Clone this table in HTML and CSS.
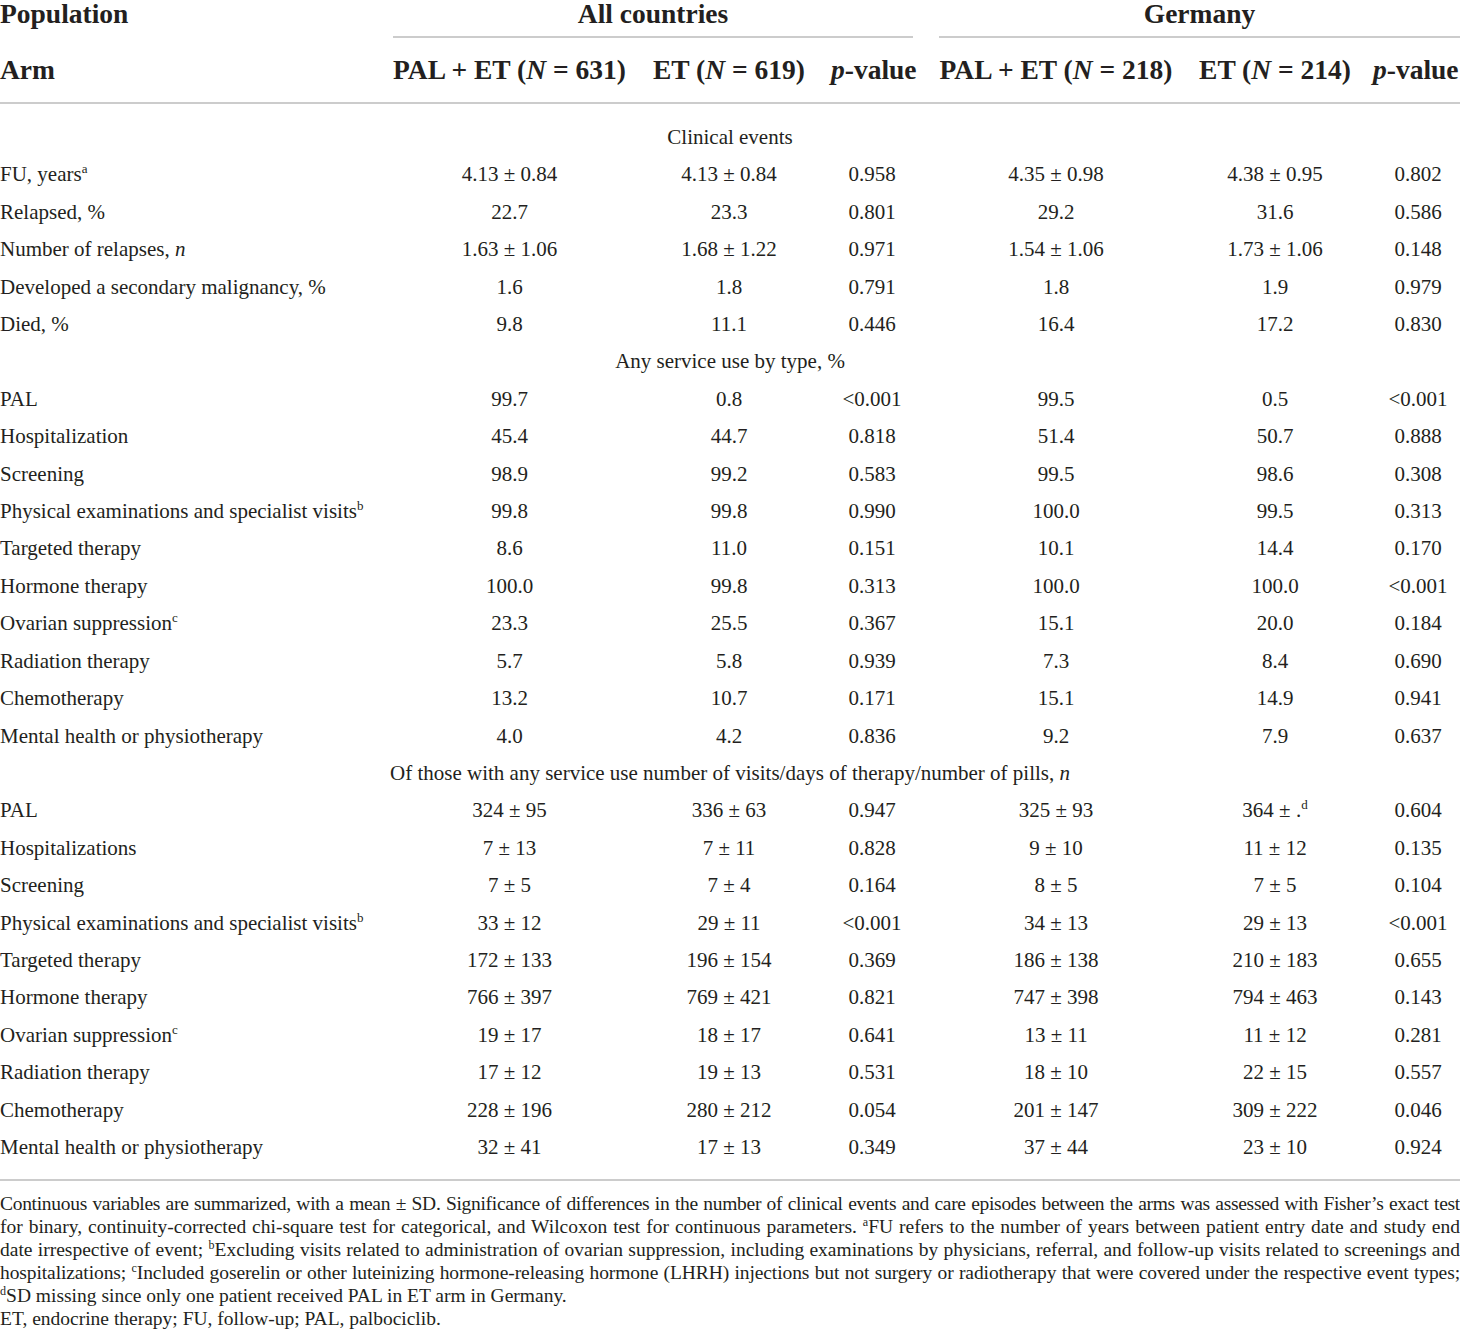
FILE: index.html
```html
<!DOCTYPE html>
<html lang="en">
<head>
<meta charset="utf-8">
<title>Table</title>
<link rel="stylesheet" href="styles.css">
</head>
<body>
<div class="page">
<table class="data">
  <colgroup>
    <col class="c-label"><col class="c-a"><col class="c-b"><col class="c-p"><col class="c-a2"><col class="c-b"><col class="c-p2">
  </colgroup>
  <thead>
    <tr class="h1">
      <th class="lbl">Population</th>
      <th colspan="3" class="grp grp-all"><div class="grp-line">All countries</div></th>
      <th colspan="3" class="grp grp-de"><div class="grp-line">Germany</div></th>
    </tr>
    <tr class="h2">
      <th class="lbl">Arm</th>
      <th>PAL + ET (<i>N</i> = 631)</th>
      <th>ET (<i>N</i> = 619)</th>
      <th><i>p</i>-value</th>
      <th>PAL + ET (<i>N</i> = 218)</th>
      <th>ET (<i>N</i> = 214)</th>
      <th class="last"><i>p</i>-value</th>
    </tr>
  </thead>
  <tbody>
    <tr class="sec first"><td colspan="7">Clinical events</td></tr>
    <tr><td class="lbl">FU, years<sup>a</sup></td><td>4.13 ± 0.84</td><td>4.13 ± 0.84</td><td>0.958</td><td>4.35 ± 0.98</td><td>4.38 ± 0.95</td><td class="last">0.802</td></tr>
    <tr><td class="lbl">Relapsed, %</td><td>22.7</td><td>23.3</td><td>0.801</td><td>29.2</td><td>31.6</td><td class="last">0.586</td></tr>
    <tr><td class="lbl">Number of relapses, <i>n</i></td><td>1.63 ± 1.06</td><td>1.68 ± 1.22</td><td>0.971</td><td>1.54 ± 1.06</td><td>1.73 ± 1.06</td><td class="last">0.148</td></tr>
    <tr><td class="lbl">Developed a secondary malignancy, %</td><td>1.6</td><td>1.8</td><td>0.791</td><td>1.8</td><td>1.9</td><td class="last">0.979</td></tr>
    <tr><td class="lbl">Died, %</td><td>9.8</td><td>11.1</td><td>0.446</td><td>16.4</td><td>17.2</td><td class="last">0.830</td></tr>
    <tr class="sec"><td colspan="7">Any service use by type, %</td></tr>
    <tr><td class="lbl">PAL</td><td>99.7</td><td>0.8</td><td>&lt;0.001</td><td>99.5</td><td>0.5</td><td class="last">&lt;0.001</td></tr>
    <tr><td class="lbl">Hospitalization</td><td>45.4</td><td>44.7</td><td>0.818</td><td>51.4</td><td>50.7</td><td class="last">0.888</td></tr>
    <tr><td class="lbl">Screening</td><td>98.9</td><td>99.2</td><td>0.583</td><td>99.5</td><td>98.6</td><td class="last">0.308</td></tr>
    <tr><td class="lbl">Physical examinations and specialist visits<sup>b</sup></td><td>99.8</td><td>99.8</td><td>0.990</td><td>100.0</td><td>99.5</td><td class="last">0.313</td></tr>
    <tr><td class="lbl">Targeted therapy</td><td>8.6</td><td>11.0</td><td>0.151</td><td>10.1</td><td>14.4</td><td class="last">0.170</td></tr>
    <tr><td class="lbl">Hormone therapy</td><td>100.0</td><td>99.8</td><td>0.313</td><td>100.0</td><td>100.0</td><td class="last">&lt;0.001</td></tr>
    <tr><td class="lbl">Ovarian suppression<sup>c</sup></td><td>23.3</td><td>25.5</td><td>0.367</td><td>15.1</td><td>20.0</td><td class="last">0.184</td></tr>
    <tr><td class="lbl">Radiation therapy</td><td>5.7</td><td>5.8</td><td>0.939</td><td>7.3</td><td>8.4</td><td class="last">0.690</td></tr>
    <tr><td class="lbl">Chemotherapy</td><td>13.2</td><td>10.7</td><td>0.171</td><td>15.1</td><td>14.9</td><td class="last">0.941</td></tr>
    <tr><td class="lbl">Mental health or physiotherapy</td><td>4.0</td><td>4.2</td><td>0.836</td><td>9.2</td><td>7.9</td><td class="last">0.637</td></tr>
    <tr class="sec"><td colspan="7">Of those with any service use number of visits/days of therapy/number of pills, <i>n</i></td></tr>
    <tr><td class="lbl">PAL</td><td>324 ± 95</td><td>336 ± 63</td><td>0.947</td><td>325 ± 93</td><td>364 ± .<sup>d</sup></td><td class="last">0.604</td></tr>
    <tr><td class="lbl">Hospitalizations</td><td>7 ± 13</td><td>7 ± 11</td><td>0.828</td><td>9 ± 10</td><td>11 ± 12</td><td class="last">0.135</td></tr>
    <tr><td class="lbl">Screening</td><td>7 ± 5</td><td>7 ± 4</td><td>0.164</td><td>8 ± 5</td><td>7 ± 5</td><td class="last">0.104</td></tr>
    <tr><td class="lbl">Physical examinations and specialist visits<sup>b</sup></td><td>33 ± 12</td><td>29 ± 11</td><td>&lt;0.001</td><td>34 ± 13</td><td>29 ± 13</td><td class="last">&lt;0.001</td></tr>
    <tr><td class="lbl">Targeted therapy</td><td>172 ± 133</td><td>196 ± 154</td><td>0.369</td><td>186 ± 138</td><td>210 ± 183</td><td class="last">0.655</td></tr>
    <tr><td class="lbl">Hormone therapy</td><td>766 ± 397</td><td>769 ± 421</td><td>0.821</td><td>747 ± 398</td><td>794 ± 463</td><td class="last">0.143</td></tr>
    <tr><td class="lbl">Ovarian suppression<sup>c</sup></td><td>19 ± 17</td><td>18 ± 17</td><td>0.641</td><td>13 ± 11</td><td>11 ± 12</td><td class="last">0.281</td></tr>
    <tr><td class="lbl">Radiation therapy</td><td>17 ± 12</td><td>19 ± 13</td><td>0.531</td><td>18 ± 10</td><td>22 ± 15</td><td class="last">0.557</td></tr>
    <tr><td class="lbl">Chemotherapy</td><td>228 ± 196</td><td>280 ± 212</td><td>0.054</td><td>201 ± 147</td><td>309 ± 222</td><td class="last">0.046</td></tr>
    <tr class="lastrow"><td class="lbl">Mental health or physiotherapy</td><td>32 ± 41</td><td>17 ± 13</td><td>0.349</td><td>37 ± 44</td><td>23 ± 10</td><td class="last">0.924</td></tr>
  </tbody>
</table>
<div class="notes">
  <p class="note">
    <span class="ln ln1">Continuous variables are summarized, with a mean ± SD. Significance of differences in the number of clinical events and care episodes between the arms was assessed with Fisher’s exact test</span>
    <span class="ln ln2">for binary, continuity-corrected chi-square test for categorical, and Wilcoxon test for continuous parameters. <sup>a</sup>FU refers to the number of years between patient entry date and study end</span>
    <span class="ln ln3">date irrespective of event; <sup>b</sup>Excluding visits related to administration of ovarian suppression, including examinations by physicians, referral, and follow-up visits related to screenings and</span>
    <span class="ln ln4">hospitalizations; <sup>c</sup>Included goserelin or other luteinizing hormone-releasing hormone (LHRH) injections but not surgery or radiotherapy that were covered under the respective event types;</span>
    <span class="ln lnend"><sup>d</sup>SD missing since only one patient received PAL in ET arm in Germany.</span>
  </p>
  <p class="note">ET, endocrine therapy; FU, follow-up; PAL, palbociclib.</p>
</div>
</div>
</body>
</html>
```

FILE: styles.css
```css
html, body {
  margin: 0;
  padding: 0;
  background: #ffffff;
}
body {
  font-family: "Liberation Serif", "Times New Roman", serif;
  color: #231f20;
  overflow: hidden;
}
.page {
  width: 1460px;
}
.data {
  width: 1460px;
  table-layout: fixed;
  border-collapse: collapse;
  border-bottom: 2px solid #cccccc;
}
.c-label { width: 379px; }
.c-a { width: 261px; }
.c-b { width: 178px; }
.c-p { width: 108px; }
.c-a2 { width: 260px; }
.c-p2 { width: 96px; }

.data th {
  font-size: 27.5px;
  font-weight: bold;
  text-align: center;
  white-space: nowrap;
  padding: 0 13px;
}
.data th i { font-style: italic; }
.data .h1 th {
  line-height: 27px;
  vertical-align: top;
  padding-top: 0;
  padding-bottom: 0;
}
.data .h1 th.lbl { padding-bottom: 11px; }
.grp-line {
  padding-bottom: 9px;
  border-bottom: 2px solid #cccccc;
}
.data .grp-all { padding: 0 13px 0 14px; }
.data .grp-de { padding: 0 0 0 13px; }
.data .h2 th {
  height: 64px;
  line-height: 30px;
  padding-top: 0;
  padding-bottom: 0;
  border-bottom: 2px solid #cccccc;
  vertical-align: middle;
}
.data th.lbl, .data td.lbl {
  text-align: left;
  padding-left: 0;
}
.data th.last, .data td.last {
  padding: 0 2px 0 14px;
}
.data .h2 th.last {
  padding: 0 5px 0 9px;
}

.data td {
  font-size: 21px;
  line-height: 23.4px;
  padding: 7px 13px;
  text-align: center;
  white-space: nowrap;
}
.data td.last { padding-top: 7px; padding-bottom: 7px; }
.data tr.sec td {
  text-align: center;
  padding-left: 0;
  padding-right: 0;
}
.data tr.first td { padding-top: 22px; }
.data tr.lastrow td { padding-bottom: 20px; }

sup {
  font-size: 0.62em;
  line-height: 0;
  vertical-align: 0.6em;
}

.notes {
  padding-top: 11px;
}
.note {
  margin: 0;
  font-size: 19.5px;
  line-height: 23px;
}
.ln {
  display: block;
  white-space: nowrap;
  text-align: justify;
  text-align-last: justify;
}
.ln1 { letter-spacing: -0.3px; }
.ln2, .ln3 { letter-spacing: 0; }
.ln4 { letter-spacing: -0.1px; }
.lnend {
  text-align-last: left;
}
```
